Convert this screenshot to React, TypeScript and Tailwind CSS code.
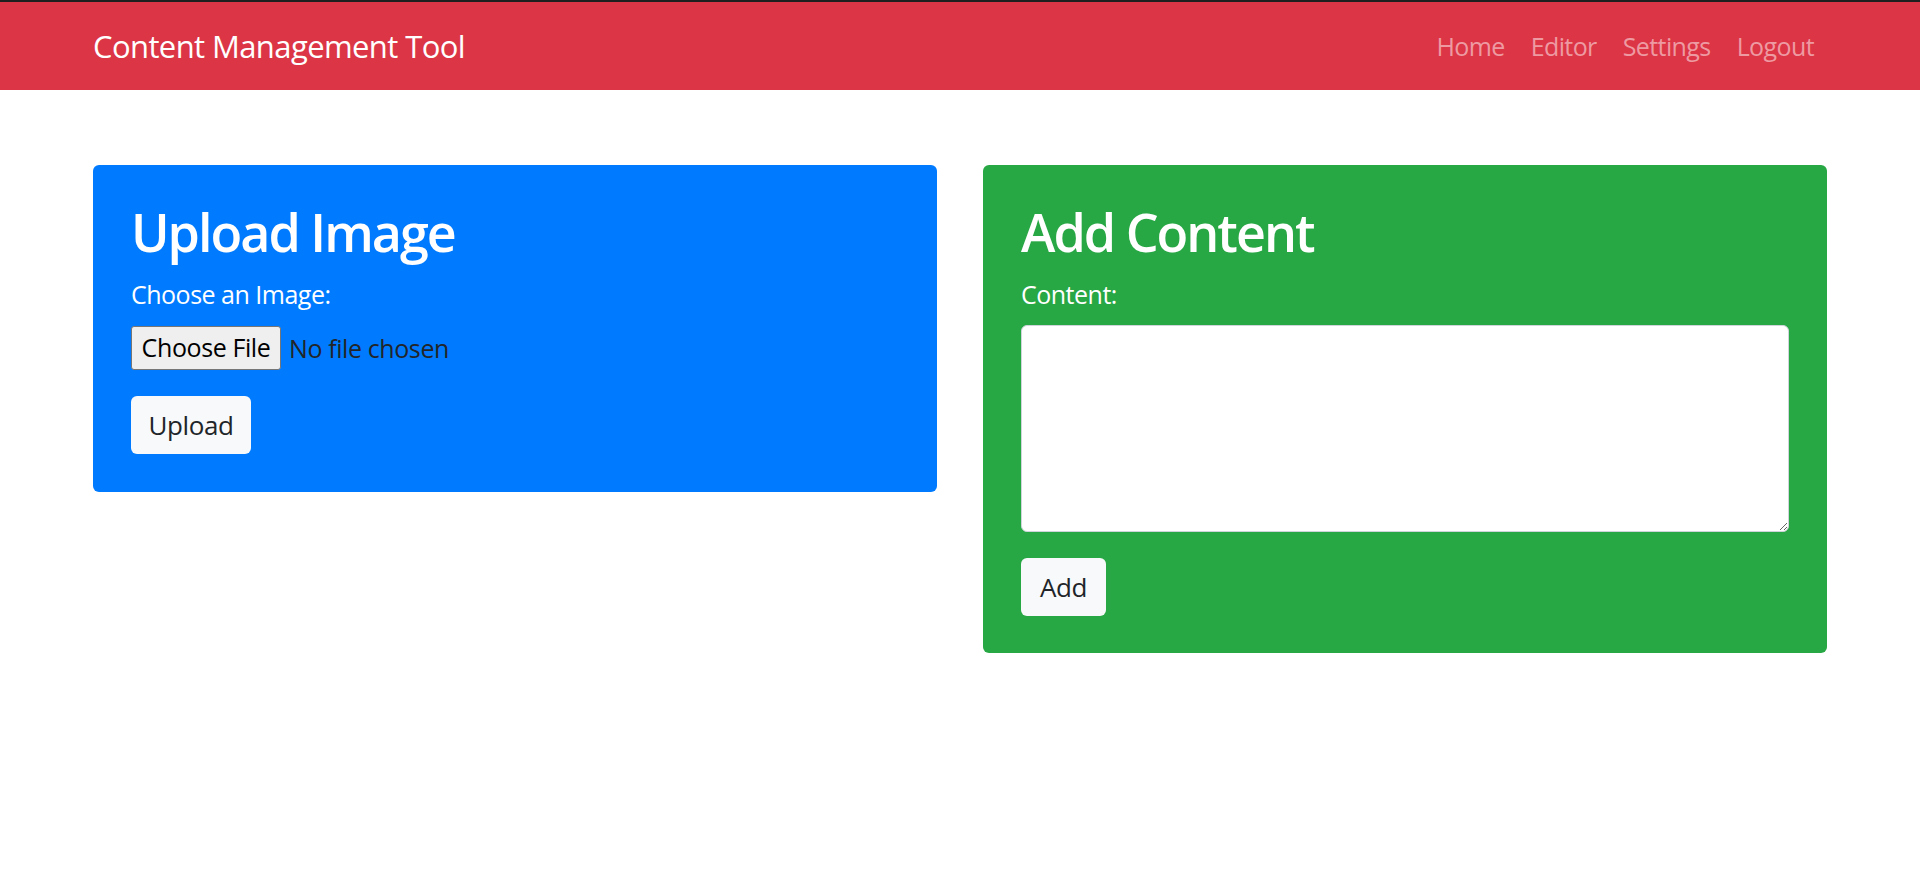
import { useState } from "react"

const Navbar = () => {
  const links = ["Home", "Editor", "Settings", "Logout"]

  return (
    <nav className="h-[90px] border-t-2 border-[#1f1f1f] bg-[#dc3545] px-[93px] flex items-center justify-between">
      <a href="#" className="text-[31px] leading-[44px] tracking-[-0.6px] text-white">
        Content Management Tool
      </a>
      <ul className="flex items-center">
        {links.map((link) => (
          <li key={link}>
            <a
              href="#"
              className="block px-[13px] text-[25px] leading-[40px] tracking-[-0.6px] text-[#ee9aa2] hover:text-white"
            >
              {link}
            </a>
          </li>
        ))}
      </ul>
    </nav>
  )
}

const App = () => {
  const [fileName, setFileName] = useState("")
  const [content, setContent] = useState("")

  return (
    <div className="min-h-screen bg-white font-['Open_Sans',sans-serif] text-[#212529]">
      <Navbar />

      <main className="px-[93px] pt-[75px] grid grid-cols-2 gap-[46px] items-start">
        {/* Upload Image */}
        <section className="rounded-[6px] bg-[#007bff] px-[38px] pt-[35px] pb-[38px] flex flex-col items-start">
          <h2 className="text-[52px] leading-[64px] font-semibold tracking-[-2px] text-white mb-[10px]">
            Upload Image
          </h2>
          <label htmlFor="image" className="text-[25px] leading-[40px] tracking-[-0.5px] text-white mb-[12px]">
            Choose an Image:
          </label>
          <label className="flex items-center gap-[8px] cursor-pointer">
            <input
              id="image"
              type="file"
              className="hidden"
              onChange={(e) => setFileName(e.target.files?.[0]?.name ?? "")}
            />
            <span className="w-[150px] h-[44px] flex items-center justify-center rounded-[3px] border border-[#767676] bg-[#efefef] text-[25px] tracking-[-0.4px] text-black">
              Choose File
            </span>
            <span className="text-[25px] leading-[44px] tracking-[-0.4px]">{fileName || "No file chosen"}</span>
          </label>
          <button className="mt-[26px] w-[120px] h-[58px] rounded-[6px] bg-[#f8f9fa] text-[26px] tracking-[-0.4px] text-[#212529]">
            Upload
          </button>
        </section>

        {/* Add Content */}
        <section className="rounded-[6px] bg-[#28a745] px-[38px] pt-[35px] pb-[37px] flex flex-col items-start">
          <h2 className="text-[52px] leading-[64px] font-semibold tracking-[-2px] text-white mb-[10px]">
            Add Content
          </h2>
          <label htmlFor="content" className="text-[25px] leading-[40px] tracking-[-0.5px] text-white mb-[11px]">
            Content:
          </label>
          <textarea
            id="content"
            value={content}
            onChange={(e) => setContent(e.target.value)}
            className="w-full h-[207px] rounded-[6px] border border-[#ced4da] bg-white px-[16px] py-[10px] text-[26px] outline-none"
          />
          <button className="mt-[26px] w-[85px] h-[58px] rounded-[6px] bg-[#f8f9fa] text-[26px] tracking-[-0.4px] text-[#212529]">
            Add
          </button>
        </section>
      </main>
    </div>
  )
}

export default App
